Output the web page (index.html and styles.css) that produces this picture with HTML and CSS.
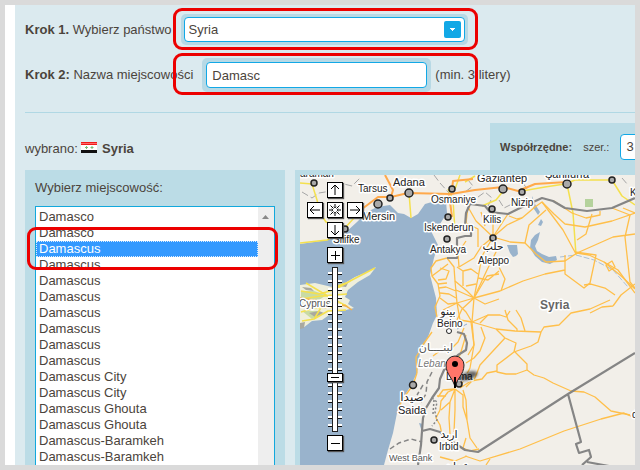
FILE: index.html
```html
<!DOCTYPE html>
<html lang="pl">
<head>
<meta charset="utf-8">
<title>Wybierz miejscowość</title>
<link rel="stylesheet" href="styles.css">
</head>
<body>
<main class="page">
  <form class="panel">
    <div class="step">
      <label for="country"><b>Krok 1.</b> Wybierz państwo</label>
      <div class="field field-select">
        <select id="country" class="country"><option>Syria</option></select>
        <svg class="arrow" viewBox="0 0 17 17" aria-hidden="true"><rect width="17" height="17" rx="2" fill="#12a8e6"/><path d="M6 7h5v1h-1v1H9v1H8V9H7V8H6z" fill="#fff"/></svg>
        <span class="mark mark-country"></span>
      </div>
    </div>
    <div class="step">
      <label for="town"><b>Krok 2:</b> Nazwa miejscowości</label>
      <div class="field field-town">
        <input id="town" class="town" type="text" value="Damasc">
        <span class="mark mark-town"></span>
      </div>
      <span class="hint">(min. 3 litery)</span>
    </div>
    <hr class="rule">
    <div class="summary">
      <p class="chosen">wybrano:
        <svg class="flag" viewBox="0 0 16 11" role="img" aria-label="Flaga"><rect width="16" height="11" fill="#fff"/><rect width="16" height="3" fill="#f01c1c"/><rect y="1" width="16" height="1" fill="#ff6a6a"/><rect y="8" width="16" height="3" fill="#111"/><path d="M4 5.500h3M5.500 4v3M9.500 5.500h3M11 4v3" stroke="#79bd79"/></svg>
        <b>Syria</b></p>
      <div class="coords">
        <b>Współrzędne:</b>
        <label for="lat">szer.:</label>
        <input id="lat" class="lat" type="text" value="3">
      </div>
    </div>
    <div class="columns">
      <section class="places">
        <label class="places-label" for="place">Wybierz miejscowość:</label>
        <div class="listbox">
          <select id="place" class="list" size="18">
            <option>Damasco</option>
            <option>Damasco</option>
            <option selected>Damascus</option>
            <option>Damascus</option>
            <option>Damascus</option>
            <option>Damascus</option>
            <option>Damascus</option>
            <option>Damascus</option>
            <option>Damascus</option>
            <option>Damascus</option>
            <option>Damascus City</option>
            <option>Damascus City</option>
            <option>Damascus Ghouta</option>
            <option>Damascus Ghouta</option>
            <option>Damascus-Baramkeh</option>
            <option>Damascus-Baramkeh</option>
          </select>
          <span class="scroller"><svg width="7" height="4" viewBox="0 0 7 4"><path d="M0 4 3.500 0 7 4z" fill="#888"/></svg></span>
          <span class="mark mark-place"></span>
        </div>
      </section>
      <section class="map">
        <svg class="map-view" viewBox="300 175 335 290" preserveAspectRatio="xMinYMin slice" role="img" aria-label="Mapa">
          <rect x="300" y="175" width="335" height="290" fill="#f2efe9"/>
          <path fill="#99b3cc" d="M300 244 328 240 345 233 357 222 367 212 377 207 390 205 398 213 404 214 411 218 418 214 425 204 432 202 446 201 447 213 440 224 431 231 438 245 434 258 430 275 436 298 437 315 433 323 428 337 420 353 417 373 410 387 402 400 397 413 393 433 388 450 384 465H300z"/>
          <path fill="#efefdc" d="M300 285 315 283 332 287 345 283 355 277 367 272 376 267 370 275 358 282 348 290 345 297 350 300 348 304 354 308 346 310 332 313 322 320 312 321 303 328 300 326z"/>
          <path fill="#c9dba4" d="M301 291h13l12 4-8 6-17-2zM302 311h15l7 3-12 5z"/>
          <path fill="#a9a9a0" d="M302 287l9 1 3 3-8-1zM309 313l10-2 5 2-9 4zM338 286l10-3-2 4zM300 323l5-1-1 6-4 1z"/>
          <path fill="#b5d29c" d="M585 199h8v8h-8z"/>
          <g fill="#99b3cc">
            <path d="M535 235l5-3-2 8-3 6 2 5 5 3 7 3 7-1 1 4-7 4-8-2-7-6-5-8 1-8zM507 245h10l1 9-2 2-3 1-3-4zM541 219l2 3-2 4-3-1zM419 423l4 1v4l-2 1zM532 196l3 8 5 8-2 3-6-9z"/>
            <path fill="none" stroke="#a9c0d6" stroke-width="1" stroke-dasharray="6 2" d="M560 257l16-2 18 5 19 10 15 17"/>
            <path fill="none" stroke="#8fb0d8" stroke-width="1" d="M457 329l10-5"/>
          </g>
          <path fill="none" stroke="#a6a6a6" stroke-dasharray="7 3" d="M302 192l10 6 7-5 12-2 9-8 12 3 9-9M434 175l6 8 9 10M468 180l5 6-8 6M478 197l7-5 7 6-4 8M499 200l5 8 8-4M523 183l4 6M622 178l6 7"/>
          <path fill="none" stroke="#f4e04e" stroke-width="1.500" stroke-linejoin="round" d="M300 183 312 184 317 200 320 213 326 222 345 228 362 209M409 193 411 218M448 189 453 200 455 231M465 182l10-6M482 206 496 200 504 190M522 191 545 187 565 184 575 180 610 180M612 180l10 16 13 9M567 184 573 213 576 255M300 243l27-3 12-6M302 321l12-2 14-8 18-1M301 291l18 3 15-4 18-10 23-12M306 283l20 12 22 12M301 299l20-3 26-2M301 312l14-4 20-1M314 319l8-13 24-1M325 293l7-5 14-5M455 189l5-14"/>
          <path fill="none" stroke="#ffa94b" stroke-width="2" stroke-linejoin="round" d="M362 209 378 197 391 197 408 193 451 194 475 190 503 187 518 191 535 184 567 182M385 175l8 15-2 7M449 194l3 23M452 189l1-8 20-2"/>
          <path fill="none" stroke="#f5b24d" stroke-width="1.500" d="M324 308l12-4 10 2 6 4M300 298l26 4"/>
          <g fill="none" stroke="#ffbf4a" stroke-width="1.300" stroke-linejoin="round">
            <path d="M493 212 493 237 482 256 478 278 474 298 472 322 474 345 470 368 460 387"/>
            <path d="M493 237 507 225 522 218 535 207 542 202 554 214 565 224 585 227 612 221 635 213"/>
            <path d="M493 237 510 242 525 243 536 254 546 262 565 261 577 253 589 255 604 262 618 270 635 293"/>
            <path d="M474 298 500 291 523 281 545 274 565 270M565 255l0 19 19 14 6-5 6-28-21-3M606 265l6-4 3 6-6 4zM604 262l16 13 15 14"/>
            <path d="M613 306l8-11 14-11M584 285l7-1 14 4 10 7M590 313l12-6 11-1"/>
            <path d="M493 237 476 221 468 207M493 237 481 247 474 258 459 267M493 237 504 220 508 214M481 212l4 14M499 246l-12 24-13 28M468 207l-2 16 12 6 0 18"/>
            <path d="M542 202 563 230 576 254M554 201l18 12 14 5 14-3 0-4M577 240l9-6 6-20M525 243l4-18 17-15M577 253l36-16 22-3M612 208l18 7-5 22 5 45 5 6M635 213l-12-5"/>
            <path d="M509 216l8 3 5-1M497 263l8 16-4 12"/>
            <path d="M447 258 436 261 431 268 432 276 438 284 440 296 435 307 437 317"/>
            <path d="M432 276l8-6 8-6M438 280l8-1 3-8-9-3M438 284l9-1M439 288l7-1 10 4M440 293l9 1 7 4M440 298l8 6 9-1M447 258l7 9 1 14 2 22 3 17"/>
            <path d="M457 303 474 298M456 290 474 298M455 281l12 10 7 7M457 267l6 4 8-2 7 5M459 267l-1-14 8-12M463 271l0 15M474 298l-12 11-5 11M474 298l11 6 14-5M474 298l13-22 12-2M457 303l9 9 6 10M443 310l14-7M460 320l12 2M478 278l10 2 11-9M466 286l10-2"/>
            <path d="M472 322 496 329 515 331 541 332 544 327 559 325 571 313 590 309 610 300M472 322l16-7 12 0 6 2 4-6M474 345l-3-23M496 329l9 9 11 5-2 9-17 13 0 7 9 2 10 0 11-4 0-6-13-13M541 332l-3 10-7 4-17 6M505 338l-25 27-5 13-9 9"/>
            <path d="M460 388 471 381 482 379 487 373 497 371M527 370l7 5 10 3 9 5 18 8 13 1 11 5 16 14 19 4M474 345l-6 10M481 327l4 11-5 13-6 7-8 5M505 310l3 10 9 9 0 2M516 310l5 8 4 13M488 315l-8 8M466 335l-6 20-8 12"/>
            <path d="M455 389 448 392 441 401 440 410 436 418 440 425 442 435M455 389 450 402 449 418 450 434M455 389 455 410 454 432M455 389 463 395 463 407 467 420 470 438 477 448M463 390 466 400 467 420M466 438 463 448 470 451 479 449M455 389 443 390 438 397M446 396l-9 0M450 402l-9 8"/>
            <path d="M465 456l15 5 40-12 44-18 37-12 23-6 11 5M490 459l-4 6"/>
            <path d="M421 349l-5 8 1 16M432 332l-10 14M450 350l8-8 6-14M441 350l-8 6M417 373l-4 12-11 15-5 13"/>
            <path d="M440 457l15 4 12-5"/>
          </g>
          <g fill="none" stroke="#858585" stroke-width="2.200" stroke-linejoin="round">
            <path d="M447 258h10v-20l8-2h6v-8l-6-2 1-13 4-9 15 2 5 6 18 2 12-6 22-10 11 3 12 7 22 3 25-3 23-10"/>
            <path d="M457 332 464 334 467 343 466 350 458 355 452 362 444 370 440 379 439 388 432 398 426 408 423 418 422 431 430 429 440 432 450 440 465 450 478 452 568 394 635 353M568 394l13 48-5 2 3 9 10-3 2 7-9 8M587 462l22 4M422 431l-1 14-3 20"/>
          </g>
          <g fill="none" stroke="#858585" stroke-width="1.500">
            <path stroke-dasharray="5 3" d="M390 449l9-6 12-4 11 3M432 372l-5 10-1 12-5 8M423 385l-6 10"/>
            <path stroke-dasharray="2 2" d="M432 398l5 4-2 10 2 8-5 6M434 400l-1 14"/>
          </g>
          <g fill="#a9a9a9" stroke="#222" stroke-width="1.500">
            <circle cx="314" cy="183" r="3"/><circle cx="345" cy="229" r="3"/><circle cx="390" cy="198" r="3"/><circle cx="409" cy="193" r="4"/><circle cx="378" cy="204" r="4"/><circle cx="452" cy="189" r="3"/><circle cx="448" cy="217" r="3"/><circle cx="447" cy="239" r="3"/><circle cx="503" cy="189" r="4"/><circle cx="522" cy="192" r="3"/><circle cx="567" cy="184" r="4"/><circle cx="612" cy="180" r="3"/><circle cx="492" cy="209" r="3"/><circle cx="493" cy="238" r="3"/><circle cx="449" cy="331" r="2.500" fill="#fff" stroke-width="1"/><circle cx="413" cy="385" r="3.500"/><circle cx="434" cy="440" r="3"/><circle cx="459" cy="384" r="3"/>
          </g>
          <g class="names">
            <text x="300" y="177">araman</text>
            <text x="358" y="192">Tarsus</text>
            <text class="big" x="393" y="186">Adana</text>
            <text class="big" x="362" y="220">Mersin</text>
            <text x="333" y="243">Silifke</text>
            <text x="431" y="203">Osmaniye</text>
            <text x="424" y="231">Iskenderun</text>
            <text x="430" y="253">Antakya</text>
            <text class="big" x="477" y="182">Gaziantep</text>
            <text class="big" x="545" y="178">Şanlıurfa</text>
            <text x="511" y="206">Nizip</text>
            <text x="483" y="223">Kilis</text>
            <text class="arabic" x="493" y="250" text-anchor="middle">حلب</text>
            <text x="478" y="264">Aleppo</text>
            <text x="630" y="196">K</text>
            <text class="country-name" x="540" y="309">Syria</text>
            <text class="region" x="299" y="307">Cyprus</text>
            <text class="arabic" x="448" y="315" text-anchor="middle">بينو</text>
            <text x="437" y="327">Beino</text>
            <text class="arabic region" x="436" y="351" text-anchor="middle">لبنــــان</text>
            <text class="lebanon" x="418" y="367">Lebanon</text>
            <text x="446" y="380">Dama</text>
            <text class="arabic arabic-big" x="412" y="401" text-anchor="middle">صيدا</text>
            <text class="big" x="398" y="414">Saida</text>
            <text class="arabic" x="449" y="438" text-anchor="middle">اربد</text>
            <text x="439" y="450">Irbid</text>
            <text class="region small" x="389" y="461">West Bank</text>
            <text class="arabic" x="457" y="470" text-anchor="middle">عمان</text>
            <text x="632" y="418">d</text>
          </g>
          <defs><filter id="soft" x="-30%" y="-50%" width="160%" height="200%"><feGaussianBlur stdDeviation="1.500"/></filter></defs>
          <ellipse cx="468" cy="376" rx="10" ry="4" fill="#000" opacity=".6" transform="rotate(-18 468 376)" filter="url(#soft)"/>
          <path d="M455 388c-1-9-9-13-9-23a9 9 0 0 1 18 0c0 10-8 14-9 23z" fill="#ff766a" stroke="#222"/>
          <path d="M455 377v11" stroke="#000" stroke-width="2"/>
          <circle cx="455" cy="364" r="3" fill="#000"/>
        </svg>
        <div class="controls">
          <div class="pad">
            <button class="key up" type="button" aria-label="W górę"><svg viewBox="0 0 14 14"><path d="M7 12V2M3 6l4-4 4 4"/></svg></button>
            <button class="key left" type="button" aria-label="W lewo"><svg viewBox="0 0 14 14"><path d="M12 7H2M6 3 2 7l4 4"/></svg></button>
            <button class="key home" type="button" aria-label="Wyśrodkuj"><svg viewBox="0 0 14 14"><path d="M7 1v4M7 9v4M1 7h4M9 7h4M2.500 2.500l3 3M11.500 2.500l-3 3M2.500 11.500l3-3M11.500 11.500l-3-3"/><path d="M5.500 3.500 7 5l1.500-1.500M5.500 10.500 7 9l1.500 1.500M3.500 5.500 5 7 3.500 8.500M10.500 5.500 9 7l1.500 1.500" stroke-width=".6"/></svg></button>
            <button class="key right" type="button" aria-label="W prawo"><svg viewBox="0 0 14 14"><path d="M2 7h10M8 3l4 4-4 4"/></svg></button>
            <button class="key down" type="button" aria-label="W dół"><svg viewBox="0 0 14 14"><path d="M7 2v10M3 8l4 4 4-4"/></svg></button>
          </div>
          <button class="key" type="button" aria-label="Przybliż"><svg viewBox="0 0 14 14"><path d="M7.500 3v9M3 7.500h9"/></svg></button>
          <input class="zoom" type="range" min="0" max="100" value="68" aria-label="Powiększenie">
          <button class="key" type="button" aria-label="Oddal"><svg viewBox="0 0 14 14"><path d="M3 7.500h9"/></svg></button>
        </div>
      </section>
    </div>
  </form>
</main>
</body>
</html>
```
FILE: styles.css
```css
* { box-sizing: border-box; }

body {
  margin: 0;
  height: 100vh;
  padding: 5px;
  background: #dadada;
  color: #4b443c;
  font: 13px/16px "Liberation Sans", Arial, sans-serif;
}

.page {
  height: 100%;
  padding-left: 10px;
  background: #fff;
  overflow: hidden;
}

.panel {
  display: flex;
  flex-direction: column;
  height: 100%;
  padding: 9px 0 0 10px;
  background: #dbeaef;
}

.step {
  display: flex;
  align-items: center;
  margin-bottom: 13px;
}

.field {
  position: relative;
  margin-left: 9px;
  background: #b7d9e5;
  border-radius: 5px;
}

.field-select { width: 287px; padding: 3px; }
.field-town { width: 229px; padding: 4px; }

.country, .town, .lat {
  display: block;
  width: 100%;
  height: 26px;
  margin: 0;
  padding: 0 5px;
  border: 1px solid #12a8e6;
  border-radius: 4px;
  background: #fff;
  color: inherit;
  font: inherit;
  outline: none;
}

.country { height: 25px; padding: 0 4px; appearance: none; }

.arrow {
  position: absolute;
  top: 7px;
  right: 7px;
  width: 17px;
  height: 17px;
  pointer-events: none;
}

.hint { margin-left: 4px; }

.mark {
  position: absolute;
  z-index: 2;
  border: 3px solid #ec0000;
  border-radius: 9px;
  pointer-events: none;
}

.mark-country { inset: -6px -10px -5px -8px; }
.mark-town { inset: -5px -47px -3px -29px; }
.mark-place { inset: 20px -4px auto -9px; height: 43px; }

.rule {
  width: 100%;
  margin: 7px 0 10px;
  border: 0;
  border-top: 1px solid #b0d8e4;
}

.summary {
  display: flex;
  justify-content: space-between;
}

.chosen { margin: 18px 0 0; }
.flag { width: 16px; height: 11px; margin-right: 1px; }

.coords {
  display: flex;
  flex: 0 0 145px;
  align-items: center;
  gap: 11px;
  height: 47px;
  padding-left: 10px;
  overflow: hidden;
  background: #bbdce6;
  font-size: 11px;
}

.lat { flex: 0 0 80px; font-size: 13px; }

.columns {
  display: flex;
  flex: 1;
  gap: 10px;
  min-height: 0;
}

.places {
  display: flex;
  flex: 0 0 260px;
  flex-direction: column;
  padding: 10px 10px 0;
  background: #bbdce6;
}

.places-label { margin-bottom: 10px; }

.listbox {
  position: relative;
  display: flex;
  flex: 1;
  min-height: 0;
  border: 1px solid #12a8dc;
  border-bottom: 0;
  background: #fff;
}

.list {
  flex: 1;
  height: 100%;
  min-width: 0;
  margin: 0;
  padding: 2px 0 0;
  border: 0;
  border-radius: 0;
  outline: none;
  background: #fff;
  color: inherit;
  font: inherit;
  overflow: hidden;
  scrollbar-width: none;
}

.list option {
  min-height: 16px;
  padding: 0 3px;
  line-height: 16px;
  color: #4b443c;
}

.list option:checked {
  background-image: linear-gradient(#3399ff, #3399ff);
  -webkit-text-fill-color: #fff;
  outline: 1px dotted #d8ebff;
  outline-offset: -1px;
}

.scroller {
  flex: 0 0 16px;
  padding: 8px 0 0 4px;
  background: #eee;
  line-height: 5px;
}

.scroller svg { display: block; }

.map {
  position: relative;
  flex: 1;
  min-width: 0;
  padding: 5px 0 0 5px;
  background: #bbdce6;
}

.map-view {
  display: block;
  width: 100%;
  height: 100%;
}

.names {
  fill: #222;
  stroke: #fff;
  stroke-width: 3px;
  stroke-linejoin: round;
  paint-order: stroke;
  font-size: 10px;
}

.names .big { font-size: 11px; }
.names .arabic { font-family: "DejaVu Sans", sans-serif; font-size: 11px; }
.names .arabic-big { font-size: 12px; }
.names .region { fill: #555; }
.names .small { font-size: 9px; }
.names .lebanon { fill: #777; font-style: italic; }
.names .country-name { fill: #666; font-size: 12px; font-weight: bold; }

.controls {
  position: absolute;
  top: 12px;
  left: 12px;
  display: flex;
  flex-direction: column;
  align-items: center;
}

.pad {
  display: grid;
  grid-template: repeat(3, 16px) / repeat(3, 16px);
  gap: 4px;
  margin-bottom: 9px;
}

.up { grid-area: 1 / 2; }
.left { grid-area: 2 / 1; }
.home { grid-area: 2 / 2; }
.right { grid-area: 2 / 3; }
.down { grid-area: 3 / 2; }

.key {
  display: block;
  width: 16px;
  height: 16px;
  padding: 0;
  border: 1px solid #000;
  background: #fff;
  box-shadow: 1px 1px 1px #555;
}

.key svg {
  display: block;
  width: 14px;
  height: 14px;
  fill: none;
  stroke: #000;
}

.zoom {
  width: 16px;
  height: 165px;
  margin: 4px 0 3px;
  appearance: none;
  writing-mode: vertical-lr;
  background:
    linear-gradient(#fff, #fff) 6px 1px / 4px 163px no-repeat,
    linear-gradient(#222, #222) 5px 0 / 6px 100% no-repeat,
    linear-gradient(transparent 5px, #fff 5px 7px, #111 7px 8px) 1px 0 / 14px 8px repeat-y;
}

.zoom::-webkit-slider-thumb {
  appearance: none;
  width: 16px;
  height: 9px;
  border: 1px solid #000;
  background: linear-gradient(#000, #000) center / 8px 1px no-repeat #fff;
  box-shadow: 1px 1px 1px #555;
}
```
